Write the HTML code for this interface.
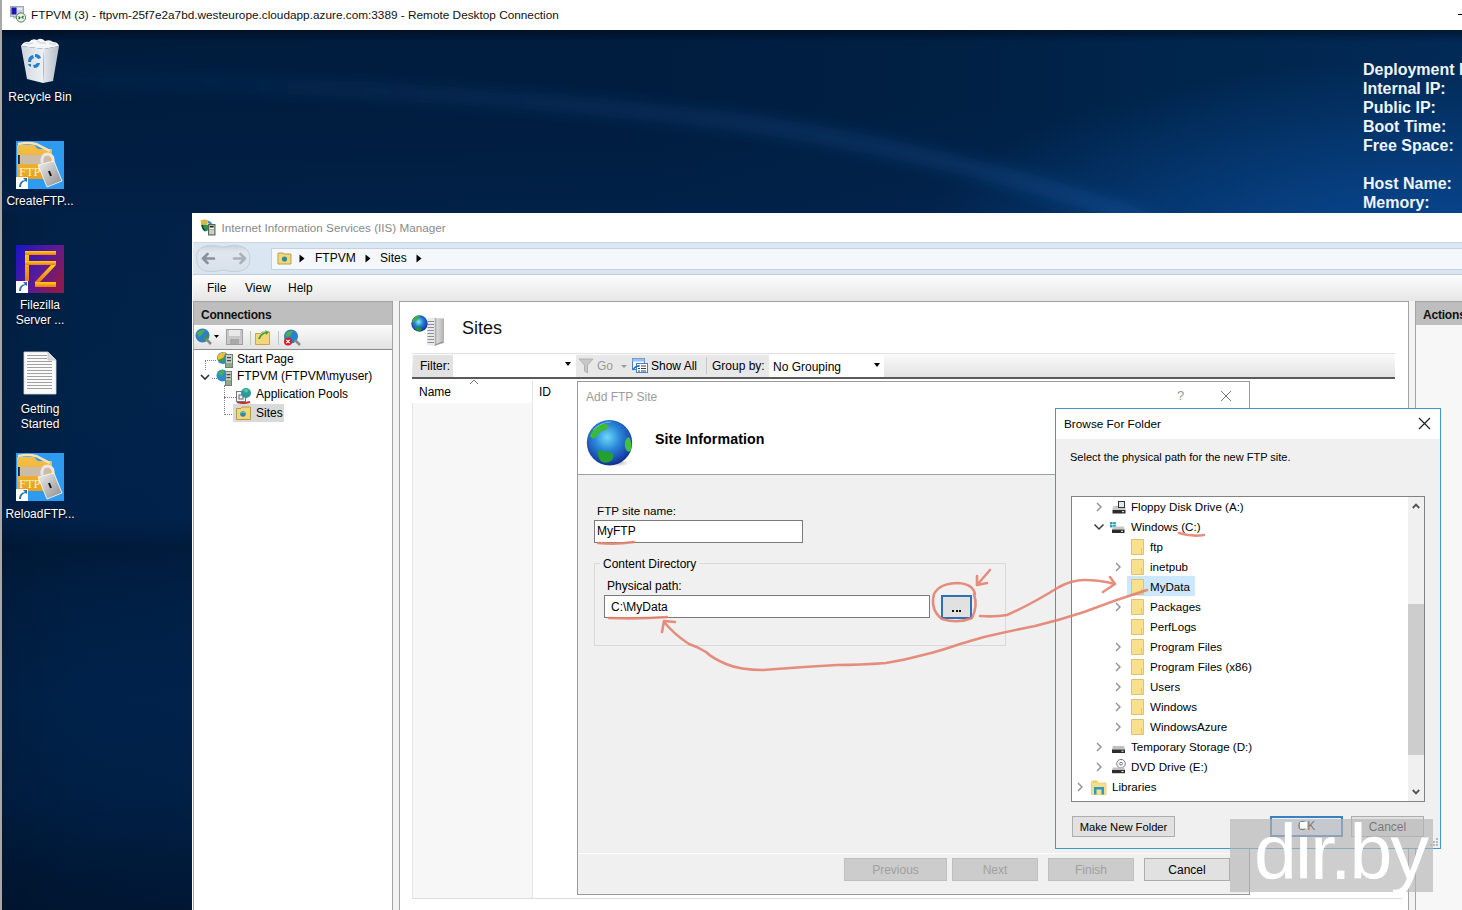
<!DOCTYPE html>
<html><head><meta charset="utf-8">
<style>
*{margin:0;padding:0;box-sizing:border-box}
html,body{width:1462px;height:910px;overflow:hidden;background:#0a2548;font-family:"Liberation Sans",sans-serif;}
.a{position:absolute;white-space:nowrap}
#root{position:absolute;left:0;top:0;width:1462px;height:910px;overflow:hidden}
#rdptitle{left:0;top:0;width:1462px;height:30px;background:#fff}
#desk{left:0;top:30px;width:1462px;height:880px;background:#001c3c}
#band{left:0;top:30px;width:1462px;height:183px;background:
linear-gradient(180deg, rgba(0,5,20,0.5) 0px, rgba(0,5,20,0) 12px),
radial-gradient(ellipse 520px 210px at 1420px 240px, rgba(10,82,165,0.85), rgba(10,82,165,0.35) 60%, rgba(10,82,165,0) 100%),
linear-gradient(180deg, rgba(0,0,0,0) 40%, rgba(10,50,110,0.18) 100%),
linear-gradient(90deg, #001c3d 0%, #001d3f 45%, #002044 65%, #00254c 80%, #022a56 100%)}
#strip{left:0;top:213px;width:192px;height:697px;background:linear-gradient(90deg,rgba(0,0,0,0.1) 0%,rgba(0,0,0,0) 40%,rgba(20,60,120,0.03) 100%),linear-gradient(180deg,#012147 0%,#012349 25%,#00214a 44%,#001a3a 48%,#001e42 54%,#00224a 70%,#001f44 84%,#001836 95%,#001632 100%)}
.dl{color:#fff;font-size:12px;text-align:center;width:80px;left:0;line-height:15px;text-shadow:0 1px 2px #000}
.info{color:#eef4fa;font-weight:bold;font-size:16px;left:1363px;line-height:19px}
.btn{background:#e1e1e1;border:1px solid #adadad;font-size:12px;color:#000;text-align:center;line-height:21px}
.dis{background:#cccccc;border-color:#bfbfbf;color:#a0a0a0}
.tr{font-size:11.6px;color:#000;line-height:15px}
.t{font-size:12px;color:#000}
</style></head><body>
<div id="root">
  <div class="a" id="desk"></div>
  <div class="a" id="band"></div>
  <svg class="a" style="left:0;top:30px" width="1462" height="183" viewBox="0 30 1462 183"><defs><filter id="bl" x="-10%" y="-50%" width="120%" height="200%"><feGaussianBlur stdDeviation="7"/></filter></defs>
    <defs><linearGradient id="stk" gradientUnits="userSpaceOnUse" x1="60" y1="0" x2="1160" y2="0"><stop offset="0" stop-color="#2873cd" stop-opacity="0.05"/><stop offset="0.5" stop-color="#2873cd" stop-opacity="0.14"/><stop offset="1" stop-color="#2873cd" stop-opacity="0.22"/></linearGradient></defs>
    <path d="M60 78 Q500 90 760 125 Q980 160 1160 225" stroke="url(#stk)" stroke-width="18" fill="none" filter="url(#bl)"/></svg>
  <div class="a" id="strip"></div>
  <div class="a" id="rdptitle"></div>
  <div class="a" style="left:1458px;top:14px;width:4px;height:1px;background:#000"></div>
  <div class="a" style="left:0;top:0;width:2px;height:910px;background:#a8a8a8"></div>
  <svg class="a" style="left:9px;top:5px" width="18" height="19" viewBox="0 0 18 19">
    <rect x="1.5" y="1.5" width="13" height="10" fill="#c8d0e0" stroke="#a0a8b8"/><rect x="2.5" y="2.5" width="5" height="7" fill="#1a14b0"/><rect x="8" y="3" width="5" height="2" fill="#e8f0ff"/>
    <rect x="4" y="12" width="6" height="1.5" fill="#bbb"/>
    <circle cx="12" cy="12.5" r="4.6" fill="#e8f4e8" stroke="#5a7a5a" stroke-width="1"/><path d="M9.5 11.5L11 12.7L9.5 14M14.5 11L13 12.3L14.5 13.6" stroke="#2a6a2a" stroke-width="1.2" fill="none"/>
  </svg>
  <div class="a t" style="left:31px;top:8px;font-size:11.8px;color:#111">FTPVM (3) - ftpvm-25f7e2a7bd.westeurope.cloudapp.azure.com:3389 - Remote Desktop Connection</div>

  <!-- desktop info -->
  <div class="a info" style="top:60px">Deployment I<br>Internal IP:<br>Public IP:<br>Boot Time:<br>Free Space:<br><br>Host Name:<br>Memory:</div>


  <!-- desktop icons -->
  <svg class="a" style="left:19px;top:37px" width="42" height="48" viewBox="0 0 42 48">
    <defs><linearGradient id="rbL" x1="0" y1="0" x2="1" y2="0"><stop offset="0" stop-color="#cfd6de"/><stop offset="1" stop-color="#eef2f5"/></linearGradient>
    <linearGradient id="rbR" x1="0" y1="0" x2="1" y2="0"><stop offset="0" stop-color="#e4e8ec"/><stop offset="1" stop-color="#b4bcc6"/></linearGradient></defs>
    <path d="M2 9 L25 12 L24 46 L8 42Z" fill="url(#rbL)"/>
    <path d="M25 12 L40 9 L34 44 L24 46Z" fill="url(#rbR)"/>
    <path d="M2 9 Q5 4 10 5 Q13 1 18 3 Q22 0 26 4 Q31 2 34 5 Q39 5 40 9 L25 12Z" fill="#f4f6f8"/>
    <path d="M6 6 Q10 8 14 6 M18 4 Q22 7 27 6 M30 6 Q34 8 37 7" stroke="#c8ced6" stroke-width="1" fill="none"/>
    <g fill="#1f80d2"><path d="M9 25 Q9 19 14 18 L15 21 Q12 22 12 25Z"/><path d="M16 17 Q21 17 22 21 L19 22 Q18 20 16 20Z"/><path d="M21 26 Q20 31 15 31 L14 28 Q17 28 18 26Z"/><path d="M12 30 Q9 29 9 27 L12 27Z"/></g>
  </svg>
  <svg class="a" style="left:16px;top:141px" width="48" height="48" viewBox="0 0 48 48">
    <defs><linearGradient id="fo141" x1="0" y1="0" x2="0" y2="1"><stop offset="0" stop-color="#f7c04a"/><stop offset="1" stop-color="#e8a020"/></linearGradient>
    <linearGradient id="lk141" x1="0" y1="0" x2="1" y2="1"><stop offset="0" stop-color="#f0f0f0"/><stop offset="1" stop-color="#8a8a8a"/></linearGradient></defs>
    <rect width="48" height="48" fill="#2f9bf0"/>
    <path d="M1 4 L18 4 L22 8 L36 8 L36 38 L1 38Z" fill="url(#fo141)"/>
    <path d="M2 3 Q12 1 20 3 L34 10" stroke="#fbe4b8" stroke-width="2.5" fill="none"/>
    <rect x="1" y="14" width="33" height="9" fill="#cbbba8"/>
    <rect x="2" y="14" width="1.8" height="9" fill="#222"/>
    <text x="3" y="35" font-family="Liberation Serif" font-size="12.5" fill="#fff2c0">FTP</text>
    <path d="M26 22 Q25 13 32 13 Q38 14 37 22" stroke="#e8e8e8" stroke-width="3" fill="none"/>
    <path d="M22 24 L38 20 L46 40 L31 46Z" fill="url(#lk141)" stroke="#fff" stroke-width="0.8"/>
    <path d="M33 30 L35 35" stroke="#111" stroke-width="2"/>
    <rect x="0" y="36" width="12" height="12" fill="#fff"/><path d="M3 46 Q3 40 9 39 L7 37 L11 37 L11 41 L9.5 40 Q5 41 5 46Z" fill="#2a6fb0"/>
  </svg>
  <svg class="a" style="left:16px;top:245px" width="48" height="48" viewBox="0 0 48 48">
    <defs><linearGradient id="fz" x1="0" y1="0" x2="1" y2="0.6"><stop offset="0" stop-color="#1a14c8"/><stop offset="0.6" stop-color="#5a1a9a"/><stop offset="1" stop-color="#8a1a50"/></linearGradient>
    <linearGradient id="fzo" x1="0" y1="0" x2="0" y2="1"><stop offset="0" stop-color="#ffd018"/><stop offset="1" stop-color="#f07818"/></linearGradient></defs>
    <rect width="48" height="48" fill="url(#fz)"/>
    <g fill="url(#fzo)"><rect x="9" y="6" width="4" height="30"/><rect x="9" y="6" width="31" height="4"/><rect x="9" y="16" width="31" height="4"/><path d="M35 20 L40 20 L24 37 L19 37Z"/><rect x="19" y="37" width="21" height="5"/></g>
    <rect x="0" y="36" width="12" height="12" fill="#fff"/><path d="M3 46 Q3 40 9 39 L7 37 L11 37 L11 41 L9.5 40 Q5 41 5 46Z" fill="#2a6fb0"/>
  </svg>
  <svg class="a" style="left:23px;top:351px" width="34" height="44" viewBox="0 0 34 44">
    <path d="M1 1 H25 L33 9 V43 H1Z" fill="#fbfbfb" stroke="#d8d8d8" stroke-width="0.8"/>
    <path d="M25 1 V9 H33" fill="#d8dce0" stroke="#c0c0c0" stroke-width="0.8"/>
    <g stroke="#a0a0a0" stroke-width="1"><path d="M4 4.5H24M4 7.5H24M4 10.5H29M4 13.5H29M4 16.5H29M4 19.5H29M4 22.5H29M4 25.5H29M4 28.5H29M4 31.5H29M4 34.5H29M4 37.5H29"/></g>
  </svg>
  <svg class="a" style="left:16px;top:453px" width="48" height="48" viewBox="0 0 48 48">
    <defs><linearGradient id="fo453" x1="0" y1="0" x2="0" y2="1"><stop offset="0" stop-color="#f7c04a"/><stop offset="1" stop-color="#e8a020"/></linearGradient>
    <linearGradient id="lk453" x1="0" y1="0" x2="1" y2="1"><stop offset="0" stop-color="#f0f0f0"/><stop offset="1" stop-color="#8a8a8a"/></linearGradient></defs>
    <rect width="48" height="48" fill="#2f9bf0"/>
    <path d="M1 4 L18 4 L22 8 L36 8 L36 38 L1 38Z" fill="url(#fo453)"/>
    <path d="M2 3 Q12 1 20 3 L34 10" stroke="#fbe4b8" stroke-width="2.5" fill="none"/>
    <rect x="1" y="14" width="33" height="9" fill="#cbbba8"/>
    <rect x="2" y="14" width="1.8" height="9" fill="#222"/>
    <text x="3" y="35" font-family="Liberation Serif" font-size="12.5" fill="#fff2c0">FTP</text>
    <path d="M26 22 Q25 13 32 13 Q38 14 37 22" stroke="#e8e8e8" stroke-width="3" fill="none"/>
    <path d="M22 24 L38 20 L46 40 L31 46Z" fill="url(#lk453)" stroke="#fff" stroke-width="0.8"/>
    <path d="M33 30 L35 35" stroke="#111" stroke-width="2"/>
    <rect x="0" y="36" width="12" height="12" fill="#fff"/><path d="M3 46 Q3 40 9 39 L7 37 L11 37 L11 41 L9.5 40 Q5 41 5 46Z" fill="#2a6fb0"/>
  </svg>
  <!-- desktop labels -->
  <div class="a dl" style="top:90px">Recycle Bin</div>
  <div class="a dl" style="top:194px">CreateFTP...</div>
  <div class="a dl" style="top:298px">Filezilla<br>Server ...</div>
  <div class="a dl" style="top:402px">Getting<br>Started</div>
  <div class="a dl" style="top:507px">ReloadFTP...</div>


  <!-- IIS window -->
  <div class="a" style="left:192px;top:213px;width:1270px;height:697px;background:#fff"></div>
  <!-- title -->
  <svg class="a" style="left:199px;top:218px" width="18" height="18" viewBox="0 0 18 18">
    <path d="M1.5 2.5 Q5 1 9 2 L8.5 7 Q5 8 2.5 7Z" fill="#d8b848"/>
    <path d="M9 2.5 Q12 3 13.5 6 L11 8 Q10 5 9 5Z" fill="#4a90b8"/>
    <path d="M2.5 6.5 Q5 7 8.5 7 L11 8.5 Q10 13 6 13.5 Q3 12 2.5 6.5Z" fill="#1f9a50"/>
    <path d="M3 7 Q3.5 11 6 12.5" stroke="#153a4a" stroke-width="1.5" fill="none"/>
    <rect x="9.5" y="6.5" width="6.5" height="10.5" fill="#a8b4a0" stroke="#5a6658" stroke-width="1"/>
    <rect x="11" y="8" width="3.5" height="1.2" fill="#223"/><rect x="10.5" y="10" width="4.5" height="1" fill="#eef"/><rect x="10.5" y="12" width="4.5" height="4" fill="#c8d4c0"/>
  </svg>
  <div class="a t" id="iistitle" style="left:221.5px;top:221px;font-size:11.7px;color:#8a8a8a">Internet Information Services (IIS) Manager</div>
  <!-- address bar -->
  <div class="a" style="left:193px;top:242px;width:1269px;height:33px;background:#dbe6f3;border-top:1px solid #c9d7e7;border-bottom:1px solid #c0cfe0"></div>
  <svg class="a" style="left:195px;top:244px" width="57" height="29" viewBox="0 0 57 29">
    <defs><linearGradient id="pill" x1="0" y1="0" x2="0" y2="1"><stop offset="0" stop-color="#c9d3de"/><stop offset="0.25" stop-color="#dfe6ee"/><stop offset="1" stop-color="#d8e1eb"/></linearGradient></defs>
    <path d="M14 1.5 Q22 1 28 3 Q34 1 42 1.5 Q55 3 55 14.5 Q55 27 42 27.5 Q34 28 28 26 Q22 28 14 27.5 Q1.5 27 1.5 14.5 Q1.5 2 14 1.5Z" fill="url(#pill)" stroke="#c5ced8" stroke-width="1"/>
    <path d="M8 14.5H19M8 14.5L12.5 10M8 14.5L12.5 19" stroke="#8a929b" stroke-width="2.6" fill="none" stroke-linecap="round"/>
    <path d="M39 14.5H50M50 14.5L45.5 10M50 14.5L45.5 19" stroke="#a9b1ba" stroke-width="2.6" fill="none" stroke-linecap="round"/>
  </svg>
  <div class="a" style="left:271px;top:248px;width:1191px;height:22px;background:#f4f8fc;border:1px solid #c3d1e0;border-right:none"></div>
  <svg class="a" style="left:277px;top:250px" width="15" height="15" viewBox="0 0 15 15"><path d="M1 3h5l1 1h7v10H1z" fill="#f0d878" stroke="#b8a050"/><circle cx="7.5" cy="9" r="2.6" fill="#2f8a9a"/></svg>
  <svg class="a" style="left:299px;top:254px" width="6" height="9" viewBox="0 0 6 9"><path d="M0.5 0.5L5.5 4.5L0.5 8.5Z" fill="#000"/></svg>
  <div class="a t" style="left:315px;top:251px">FTPVM</div>
  <svg class="a" style="left:365px;top:254px" width="6" height="9" viewBox="0 0 6 9"><path d="M0.5 0.5L5.5 4.5L0.5 8.5Z" fill="#000"/></svg>
  <div class="a t" style="left:380px;top:251px">Sites</div>
  <svg class="a" style="left:416px;top:254px" width="6" height="9" viewBox="0 0 6 9"><path d="M0.5 0.5L5.5 4.5L0.5 8.5Z" fill="#000"/></svg>
  <!-- menu bar -->
  <div class="a" style="left:193px;top:275px;width:1269px;height:26px;background:linear-gradient(#fdfdfd,#e6e6e6)"></div>
  <div class="a t" style="left:207px;top:281px">File</div>
  <div class="a t" style="left:245px;top:281px">View</div>
  <div class="a t" style="left:288px;top:281px">Help</div>
  <div class="a" style="left:193px;top:301px;width:1269px;height:609px;background:#f3f3f3"></div>

  <!-- connections panel -->
  <div class="a" style="left:193px;top:301px;width:200px;height:640px;background:#fff;border:1px solid #a3a3a3"></div>
  <div class="a" style="left:194px;top:302px;width:198px;height:23px;background:#bebebe"></div>
  <div class="a" style="left:201px;top:308px;font-size:12px;font-weight:bold;color:#111;letter-spacing:-0.2px">Connections</div>
  <div class="a" style="left:194px;top:325px;width:198px;height:24px;background:linear-gradient(#fbfbfb,#e2e2e2)"></div>
  <div class="a" style="left:194px;top:349px;width:198px;height:1px;background:#8c8c8c"></div>

  <!-- sites panel -->
  <div class="a" style="left:399px;top:301px;width:1010px;height:640px;background:#fff;border:1px solid #a3a3a3"></div>
  <div class="a" style="left:462px;top:318px;font-size:18px;color:#111">Sites</div>
  <div class="a" style="left:412px;top:353px;width:983px;height:26px;background:linear-gradient(#fafafa,#e3e3e3);border-top:1px solid #e2e2e2;border-bottom:2px solid #5a5a5a"></div>
  <div class="a" style="left:413px;top:355px;width:40px;height:22px;background:#e2e2e2"></div>
  <div class="a t" style="left:420px;top:359px">Filter:</div>
  <div class="a" style="left:453px;top:355px;width:123px;height:22px;background:#fff"></div>
  <div class="a" style="left:565px;top:362px;width:0;height:0;border-left:3.5px solid transparent;border-right:3.5px solid transparent;border-top:4px solid #000"></div>
  <div class="a" style="left:576px;top:355px;width:193px;height:22px;background:#e8e8e8"></div>
  <div class="a t" style="left:597px;top:359px;color:#9a9a9a">Go</div>
  <div class="a t" style="left:651px;top:359px">Show All</div>
  <div class="a" style="left:706px;top:357px;width:1px;height:17px;background:#c8c8c8"></div>
  <div class="a t" style="left:712px;top:359px">Group by:</div>
  <div class="a" style="left:769px;top:355px;width:115px;height:22px;background:#fff"></div>
  <div class="a t" style="left:773px;top:360px">No Grouping</div>
  <div class="a" style="left:874px;top:363px;width:0;height:0;border-left:3.5px solid transparent;border-right:3.5px solid transparent;border-top:4px solid #000"></div>
  <!-- list -->
  <div class="a" style="left:412px;top:380px;width:120px;height:519px;background:#f7f7f7;border-left:1px solid #e4e4e4;border-bottom:1px solid #dcdcdc"></div>
  <div class="a" style="left:412px;top:380px;width:120px;height:23px;background:#fff"></div>
  <div class="a" style="left:532px;top:380px;width:1px;height:519px;background:#e6e6e6"></div>
  <div class="a" style="left:532px;top:898px;width:870px;height:1px;background:#dcdcdc"></div>
  <div class="a t" style="left:419px;top:385px">Name</div>
  <div class="a t" style="left:539px;top:385px">ID</div>
  <svg class="a" style="left:469px;top:379px" width="10" height="6" viewBox="0 0 10 6"><path d="M1 5L5 1L9 5" stroke="#7a7a7a" stroke-width="1" fill="none"/></svg>


  <!-- connections toolbar icons -->
  <svg class="a" style="left:195px;top:328px" width="26" height="18" viewBox="0 0 26 18">
    <circle cx="7.5" cy="7.5" r="7" fill="#2f7fc8"/><path d="M2 5 Q6 1 10 2 Q8 6 4 9Z" fill="#4cb04c"/><path d="M8 10 Q12 9 14 6 L14 10 Q11 13 8 12Z" fill="#3a9a3a"/>
    <path d="M11 11 L16 16" stroke="#888" stroke-width="2.5"/>
    <path d="M19 7 L24 7 L21.5 10Z" fill="#000"/>
  </svg>
  <svg class="a" style="left:226px;top:329px" width="17" height="16" viewBox="0 0 17 16">
    <rect x="0.5" y="0.5" width="16" height="15" fill="#c8c8c8" stroke="#a0a0a0"/><rect x="3" y="1" width="11" height="6" fill="#e8e8e8"/><rect x="4" y="10" width="9" height="5" fill="#a8a8a8"/>
  </svg>
  <div class="a" style="left:250px;top:331px;width:1px;height:14px;background:#c4c4c4"></div>
  <svg class="a" style="left:255px;top:329px" width="15" height="16" viewBox="0 0 15 16">
    <path d="M0.5 4.5H6L7 3H14.5V15.5H0.5Z" fill="#f1d67a" stroke="#c8a850"/><path d="M3 10 Q5 4 11 3 L10 1 L14 3 L11 6 L11 4.5 Q7 5 5 10Z" fill="#3aa03a"/>
  </svg>
  <div class="a" style="left:278px;top:331px;width:1px;height:14px;background:#c4c4c4"></div>
  <svg class="a" style="left:283px;top:329px" width="18" height="17" viewBox="0 0 18 17">
    <circle cx="8" cy="7.5" r="7" fill="#2f7fc8"/><path d="M2.5 5 Q6 1 10 2 Q8 6 4 9Z" fill="#4cb04c"/><path d="M12 11 L17 16" stroke="#888" stroke-width="2.5"/>
    <circle cx="5" cy="12.5" r="4" fill="#d02030"/><path d="M3.3 10.8L6.7 14.2M6.7 10.8L3.3 14.2" stroke="#fff" stroke-width="1.2"/>
  </svg>
  <!-- tree lines -->
  <div class="a" style="left:205px;top:360px;width:11px;height:0;border-top:1px dotted #808080"></div>
  <div class="a" style="left:205px;top:360px;width:0;height:10px;border-left:1px dotted #808080"></div>
  <div class="a" style="left:212px;top:378px;width:5px;height:0;border-top:1px dotted #808080"></div>
  <div class="a" style="left:224px;top:385px;width:0;height:30px;border-left:1px dotted #808080"></div>
  <div class="a" style="left:224px;top:397px;width:12px;height:0;border-top:1px dotted #808080"></div>
  <div class="a" style="left:224px;top:414px;width:10px;height:0;border-top:1px dotted #808080"></div>
  <svg class="a" style="left:200px;top:374px" width="10" height="7" viewBox="0 0 10 7"><path d="M1 1L5 5L9 1" stroke="#333" stroke-width="1.6" fill="none"/></svg>
  <div class="a" style="left:233px;top:404px;width:51px;height:18px;background:#d9d9d9"></div>
  <!-- tree icons -->
  <svg class="a" style="left:216px;top:351px" width="17" height="17" viewBox="0 0 17 17">
    <circle cx="7" cy="7" r="6" fill="#2f8ad0"/><path d="M1.5 5 Q5 0 10 1.5 L7 7 Q4 9 2 9Z" fill="#f0c030"/><path d="M2 9 Q5 12 9 10 L8 7Z" fill="#3aa03a"/>
    <rect x="9.5" y="3.5" width="7" height="13" fill="#c4d0c0" stroke="#6f806f"/><rect x="11" y="6" width="4" height="1.2" fill="#445"/><rect x="11" y="9" width="4" height="1.2" fill="#445"/><rect x="10" y="12" width="6" height="4" fill="#8fa88f"/>
  </svg>
  <svg class="a" style="left:216px;top:369px" width="17" height="17" viewBox="0 0 17 17">
    <circle cx="6.5" cy="6.5" r="6" fill="#2f8ad0"/><path d="M1.5 5 Q5 0 9 1.5 L6 7Z" fill="#4cb04c"/>
    <rect x="9.5" y="2.5" width="6" height="14" fill="#c4d0c0" stroke="#6f806f"/><rect x="10.5" y="5" width="4" height="1.2" fill="#445"/><rect x="10.5" y="8" width="4" height="1.2" fill="#445"/><rect x="10" y="11" width="5" height="5" fill="#8fa88f"/>
  </svg>
  <svg class="a" style="left:235px;top:387px" width="17" height="17" viewBox="0 0 17 17">
    <path d="M2 15 Q8 17 15 15" stroke="#c03030" stroke-width="2" fill="none"/>
    <rect x="1.5" y="4.5" width="9" height="10" fill="#f4f4f4" stroke="#777"/><rect x="4" y="8" width="4" height="4" fill="none" stroke="#666"/>
    <circle cx="11" cy="6" r="5" fill="#2a9a9a"/><path d="M8 3 Q11 1 14 3 L11 6Z" fill="#60c0a0"/>
  </svg>
  <svg class="a" style="left:236px;top:406px" width="15" height="14" viewBox="0 0 15 14">
    <path d="M0.5 2.5H5L6 1H14.5V13.5H0.5Z" fill="#f1d67a" stroke="#b89a48"/><circle cx="7" cy="8" r="2.8" fill="#2f8a9a"/><path d="M5 7 Q7 5 9 7" stroke="#6cd" stroke-width="1" fill="none"/>
  </svg>
  <div class="a t" style="left:237px;top:352px">Start Page</div>
  <div class="a t" style="left:237px;top:369px">FTPVM (FTPVM\myuser)</div>
  <div class="a t" style="left:256px;top:387px">Application Pools</div>
  <div class="a t" style="left:256px;top:406px">Sites</div>

  <!-- sites icon -->
  <svg class="a" style="left:410px;top:312px" width="36" height="36" viewBox="0 0 36 36">
    <defs><linearGradient id="srv" x1="0" y1="0" x2="1" y2="0"><stop offset="0" stop-color="#9a9a9a"/><stop offset="0.3" stop-color="#d8d8d8"/><stop offset="1" stop-color="#b0b0b0"/></linearGradient>
    <radialGradient id="gl2" cx="45%" cy="40%" r="60%"><stop offset="0" stop-color="#7ff0f0"/><stop offset="0.45" stop-color="#2a80d0"/><stop offset="1" stop-color="#1030a0"/></radialGradient></defs>
    <path d="M24.5 6 L34 6.5 L34 31 L24.5 34Z" fill="url(#srv)"/>
    <path d="M17 6 L24.5 6 L24.5 34 L17 33Z" fill="#e8eaec"/>
    <g stroke="#8a8e98" stroke-width="1"><path d="M17.5 9.5H24M17.5 12.5H24M17.5 15.5H24M17.5 18.5H24M17.5 21.5H24M17.5 24.5H24M17.5 27.5H24M17.5 30.5H24"/></g>
    <path d="M25 33 L33 30" stroke="#888" stroke-width="1"/>
    <circle cx="9.5" cy="11.5" r="8.2" fill="url(#gl2)"/>
    <path d="M2.5 8 Q5 3 10 3.5 Q8 7 6 9 Q4 10.5 2.5 10Z" fill="#3cb040"/><path d="M5 15 Q9 14.5 12 17 Q11 19.5 8 19 Q5 18 5 15Z" fill="#1a9a2a"/>
  </svg>
  <!-- filter bar icons -->
  <svg class="a" style="left:578px;top:357px" width="16" height="17" viewBox="0 0 16 17"><path d="M1 2 H15 L9.5 8 V16 L6.5 14 V8Z" fill="#c8c8c8" stroke="#b0b0b0"/></svg>
  <div class="a" style="left:621px;top:365px;width:0;height:0;border-left:3px solid transparent;border-right:3px solid transparent;border-top:3px solid #999"></div>
  <svg class="a" style="left:631px;top:357px" width="18" height="17" viewBox="0 0 18 17">
    <rect x="1.5" y="1.5" width="12" height="11" fill="#fff" stroke="#4a7fbf"/><rect x="1.5" y="1.5" width="12" height="3" fill="#9ec0e8"/>
    <rect x="5.5" y="6.5" width="11" height="9" fill="#fff" stroke="#4a7fbf"/><path d="M7 9h2M10 9h5M7 11.5h2M10 11.5h5M7 14h2M10 14h5" stroke="#345" stroke-width="1"/>
    <path d="M2 13 Q4 9 8 9" stroke="#2a70c0" stroke-width="1.5" fill="none"/>
  </svg>

  <!-- actions panel -->
  <div class="a" style="left:1415px;top:301px;width:47px;height:640px;background:#f7f7f7;border:1px solid #a3a3a3;border-right:none"></div>
  <div class="a" style="left:1416px;top:302px;width:46px;height:23px;background:#bebebe"></div>
  <div class="a" style="left:1423px;top:308px;font-size:12px;font-weight:bold;color:#111;letter-spacing:-0.2px">Actions</div>


  <!-- Add FTP Site dialog -->
  <div class="a" style="left:577px;top:381px;width:673px;height:514px;background:#f0f0f0;border:1px solid #9a9a9a"></div>
  <div class="a" style="left:578px;top:382px;width:671px;height:93px;background:#fff;border-bottom:1px solid #a0a0a0"></div>
  <div class="a t" style="left:586px;top:390px;color:#9b9b9b">Add FTP Site</div>
  <div class="a" style="left:1177px;top:388px;font-size:13px;color:#999">?</div>
  <svg class="a" style="left:1220px;top:390px" width="12" height="12" viewBox="0 0 12 12"><path d="M1 1L11 11M11 1L1 11" stroke="#777" stroke-width="1"/></svg>
  <svg class="a" style="left:585px;top:418px" width="50" height="50" viewBox="0 0 50 50">
    <defs><radialGradient id="gl" cx="45%" cy="38%" r="62%"><stop offset="0" stop-color="#6fd8f8"/><stop offset="0.45" stop-color="#2a88d8"/><stop offset="0.85" stop-color="#1a48b0"/><stop offset="1" stop-color="#10308a"/></radialGradient>
    <radialGradient id="glsh" cx="50%" cy="50%" r="50%"><stop offset="0" stop-color="#000" stop-opacity="0.25"/><stop offset="1" stop-color="#000" stop-opacity="0"/></radialGradient></defs>
    <ellipse cx="33" cy="45" rx="12" ry="3.5" fill="url(#glsh)"/>
    <circle cx="24.5" cy="24.7" r="22.7" fill="url(#gl)"/>
    <path d="M5 17 Q9 9 17 6 Q22 5 24 8 Q22 12 18 13 Q14 14 12 18 Q10 21 7 20 Q5 19 5 17Z" fill="#3cb83c"/>
    <path d="M44 19 Q47 24 46.5 31 Q45 35 42 33 Q39 29 40 24 Q41 20 44 19Z" fill="#44c040"/>
    <path d="M13 33 Q20 32 27 35 Q30 38 27 42 Q23 46 17 44 Q12 40 13 33Z" fill="#22a030"/>
    <path d="M8 12 Q16 4 26 4" stroke="#bfe8ff" stroke-width="1" fill="none" opacity="0.5"/>
  </svg>
  <div class="a" style="left:655px;top:431px;font-size:14.2px;font-weight:bold;color:#000;letter-spacing:0.1px">Site Information</div>
  <div class="a t" style="left:597px;top:504px;font-size:11.7px">FTP site name:</div>
  <div class="a" style="left:594px;top:520px;width:209px;height:23px;background:#fff;border:1px solid #7a7a7a"></div>
  <div class="a t" style="left:597px;top:524px">MyFTP</div>
  <div class="a" style="left:594px;top:563px;width:412px;height:83px;border:1px solid #d9d9d9"></div>
  <div class="a t" style="left:600px;top:557px;padding:0 3px;background:#f0f0f0">Content Directory</div>
  <div class="a t" style="left:607px;top:579px">Physical path:</div>
  <div class="a" style="left:604px;top:595px;width:326px;height:23px;background:#fff;border:1px solid #7a7a7a"></div>
  <div class="a t" style="left:611px;top:600px">C:\MyData</div>
  <div class="a" style="left:941px;top:595px;width:31px;height:24px;background:#e1e1e1;border:2px solid #2f6fb3"></div>
  <div class="a" style="left:952px;top:610px;width:2px;height:2px;background:#111"></div><div class="a" style="left:955.5px;top:610px;width:2px;height:2px;background:#111"></div><div class="a" style="left:959px;top:610px;width:2px;height:2px;background:#111"></div>
  <div class="a" style="left:578px;top:853px;width:671px;height:1px;background:#fff"></div>
  <div class="a btn dis" style="left:844px;top:858px;width:103px;height:23px;line-height:23.5px">Previous</div>
  <div class="a btn dis" style="left:952px;top:858px;width:86px;height:23px;line-height:23.5px">Next</div>
  <div class="a btn dis" style="left:1048px;top:858px;width:86px;height:23px;line-height:23.5px">Finish</div>
  <div class="a btn" style="left:1144px;top:858px;width:86px;height:23px;line-height:23.5px">Cancel</div>

  <!-- Browse For Folder -->
  <div class="a" style="left:1055px;top:408px;width:386px;height:441px;background:#f0f0f0;border:1px solid #3a9cc4"></div>
  <div class="a" style="left:1056px;top:409px;width:384px;height:30px;background:#fff"></div>
  <div class="a t" style="left:1064px;top:417px;font-size:11.8px">Browse For Folder</div>
  <svg class="a" style="left:1418px;top:417px" width="13" height="13" viewBox="0 0 13 13"><path d="M1 1L12 12M12 1L1 12" stroke="#222" stroke-width="1.2"/></svg>
  <div class="a" style="left:1070px;top:451px;font-size:11px;color:#000">Select the physical path for the new FTP site.</div>
  <div class="a" style="left:1071px;top:496px;width:354px;height:306px;background:#fff;border:1px solid #828282"></div>
  <div class="a" style="left:1408px;top:497px;width:16px;height:304px;background:#f0f0f0"></div>
  <div class="a" style="left:1408px;top:604px;width:16px;height:151px;background:#cdcdcd"></div>
  <svg class="a" style="left:1410px;top:501px" width="12" height="10" viewBox="0 0 12 10"><path d="M2.8 7L6 3.6L9.2 7" stroke="#555" stroke-width="1.9" fill="none"/></svg>
  <svg class="a" style="left:1410px;top:787px" width="12" height="10" viewBox="0 0 12 10"><path d="M2.8 3L6 6.4L9.2 3" stroke="#555" stroke-width="1.9" fill="none"/></svg>
  <svg class="a" style="left:1095px;top:502px" width="8" height="10" viewBox="0 0 8 10"><path d="M2 1L6 5L2 9" stroke="#8f8f8f" stroke-width="1.4" fill="none"/></svg>
  <svg class="a" style="left:1111px;top:501px" width="16" height="13" viewBox="0 0 16 13"><path d="M1.5 6.5 L3 5 H14 L14.5 6.5Z" fill="#b8b8b8"/><rect x="1.5" y="9" width="13" height="3.5" fill="#2c2c2c"/><path d="M1.5 6.5H14.5V9H1.5Z" fill="#c8c8c8"/><rect x="7.5" y="0.5" width="6" height="6" fill="#dfe6ee" stroke="#333" stroke-width="1"/><rect x="11" y="10" width="2" height="1.2" fill="#e0e0e0"/></svg>
  <div class="a tr" style="left:1131px;top:499px">Floppy Disk Drive (A:)</div>
  <svg class="a" style="left:1093px;top:523px" width="12" height="8" viewBox="0 0 12 8"><path d="M1.5 1.5L6 6L10.5 1.5" stroke="#3a3a3a" stroke-width="1.5" fill="none"/></svg>
  <svg class="a" style="left:1109px;top:521px" width="17" height="13" viewBox="0 0 17 13"><rect x="1" y="1" width="2.6" height="2.4" fill="#2a9ab8"/><rect x="4.2" y="1" width="2.6" height="2.4" fill="#2a9ab8"/><rect x="1" y="4" width="2.6" height="2.4" fill="#2a9ab8"/><rect x="4.2" y="4" width="2.6" height="2.4" fill="#2a9ab8"/><path d="M3 8.5 L4.5 5.5 H15 L15.5 8.5Z" fill="#c8c8c8"/><rect x="3" y="8.5" width="12.5" height="3.5" fill="#2c2c2c"/><rect x="12" y="9.7" width="2" height="1.2" fill="#e0e0e0"/></svg>
  <div class="a tr" style="left:1131px;top:519px">Windows (C:)</div>
  <svg class="a" style="left:1131px;top:539px" width="13" height="16" viewBox="0 0 13 16"><path d="M0.5 0.5H12.5V15.5H0.5Z" fill="#f9e08c" stroke="#dcc274" stroke-width="1"/><path d="M10.5 9V15" stroke="#e8c860" stroke-width="1"/></svg>
  <div class="a tr" style="left:1150px;top:539px">ftp</div>
  <svg class="a" style="left:1114px;top:562px" width="8" height="10" viewBox="0 0 8 10"><path d="M2 1L6 5L2 9" stroke="#8f8f8f" stroke-width="1.4" fill="none"/></svg>
  <svg class="a" style="left:1131px;top:559px" width="13" height="16" viewBox="0 0 13 16"><path d="M0.5 0.5H12.5V15.5H0.5Z" fill="#f9e08c" stroke="#dcc274" stroke-width="1"/><path d="M10.5 9V15" stroke="#e8c860" stroke-width="1"/></svg>
  <div class="a tr" style="left:1150px;top:559px">inetpub</div>
  <div class="a" style="left:1127px;top:576px;width:68px;height:20px;background:#cce8ff"></div>
  <svg class="a" style="left:1131px;top:579px" width="13" height="16" viewBox="0 0 13 16"><path d="M0.5 0.5H12.5V15.5H0.5Z" fill="#f9e08c" stroke="#dcc274" stroke-width="1"/><path d="M10.5 9V15" stroke="#e8c860" stroke-width="1"/></svg>
  <div class="a tr" style="left:1150px;top:579px">MyData</div>
  <svg class="a" style="left:1114px;top:602px" width="8" height="10" viewBox="0 0 8 10"><path d="M2 1L6 5L2 9" stroke="#8f8f8f" stroke-width="1.4" fill="none"/></svg>
  <svg class="a" style="left:1131px;top:599px" width="13" height="16" viewBox="0 0 13 16"><path d="M0.5 0.5H12.5V15.5H0.5Z" fill="#f9e08c" stroke="#dcc274" stroke-width="1"/><path d="M10.5 9V15" stroke="#e8c860" stroke-width="1"/></svg>
  <div class="a tr" style="left:1150px;top:599px">Packages</div>
  <svg class="a" style="left:1131px;top:619px" width="13" height="16" viewBox="0 0 13 16"><path d="M0.5 0.5H12.5V15.5H0.5Z" fill="#f9e08c" stroke="#dcc274" stroke-width="1"/><path d="M10.5 9V15" stroke="#e8c860" stroke-width="1"/></svg>
  <div class="a tr" style="left:1150px;top:619px">PerfLogs</div>
  <svg class="a" style="left:1114px;top:642px" width="8" height="10" viewBox="0 0 8 10"><path d="M2 1L6 5L2 9" stroke="#8f8f8f" stroke-width="1.4" fill="none"/></svg>
  <svg class="a" style="left:1131px;top:639px" width="13" height="16" viewBox="0 0 13 16"><path d="M0.5 0.5H12.5V15.5H0.5Z" fill="#f9e08c" stroke="#dcc274" stroke-width="1"/><path d="M10.5 9V15" stroke="#e8c860" stroke-width="1"/></svg>
  <div class="a tr" style="left:1150px;top:639px">Program Files</div>
  <svg class="a" style="left:1114px;top:662px" width="8" height="10" viewBox="0 0 8 10"><path d="M2 1L6 5L2 9" stroke="#8f8f8f" stroke-width="1.4" fill="none"/></svg>
  <svg class="a" style="left:1131px;top:659px" width="13" height="16" viewBox="0 0 13 16"><path d="M0.5 0.5H12.5V15.5H0.5Z" fill="#f9e08c" stroke="#dcc274" stroke-width="1"/><path d="M10.5 9V15" stroke="#e8c860" stroke-width="1"/></svg>
  <div class="a tr" style="left:1150px;top:659px">Program Files (x86)</div>
  <svg class="a" style="left:1114px;top:682px" width="8" height="10" viewBox="0 0 8 10"><path d="M2 1L6 5L2 9" stroke="#8f8f8f" stroke-width="1.4" fill="none"/></svg>
  <svg class="a" style="left:1131px;top:679px" width="13" height="16" viewBox="0 0 13 16"><path d="M0.5 0.5H12.5V15.5H0.5Z" fill="#f9e08c" stroke="#dcc274" stroke-width="1"/><path d="M10.5 9V15" stroke="#e8c860" stroke-width="1"/></svg>
  <div class="a tr" style="left:1150px;top:679px">Users</div>
  <svg class="a" style="left:1114px;top:702px" width="8" height="10" viewBox="0 0 8 10"><path d="M2 1L6 5L2 9" stroke="#8f8f8f" stroke-width="1.4" fill="none"/></svg>
  <svg class="a" style="left:1131px;top:699px" width="13" height="16" viewBox="0 0 13 16"><path d="M0.5 0.5H12.5V15.5H0.5Z" fill="#f9e08c" stroke="#dcc274" stroke-width="1"/><path d="M10.5 9V15" stroke="#e8c860" stroke-width="1"/></svg>
  <div class="a tr" style="left:1150px;top:699px">Windows</div>
  <svg class="a" style="left:1114px;top:722px" width="8" height="10" viewBox="0 0 8 10"><path d="M2 1L6 5L2 9" stroke="#8f8f8f" stroke-width="1.4" fill="none"/></svg>
  <svg class="a" style="left:1131px;top:719px" width="13" height="16" viewBox="0 0 13 16"><path d="M0.5 0.5H12.5V15.5H0.5Z" fill="#f9e08c" stroke="#dcc274" stroke-width="1"/><path d="M10.5 9V15" stroke="#e8c860" stroke-width="1"/></svg>
  <div class="a tr" style="left:1150px;top:719px">WindowsAzure</div>
  <svg class="a" style="left:1095px;top:742px" width="8" height="10" viewBox="0 0 8 10"><path d="M2 1L6 5L2 9" stroke="#8f8f8f" stroke-width="1.4" fill="none"/></svg>
  <svg class="a" style="left:1111px;top:745px" width="15" height="9" viewBox="0 0 15 9"><path d="M1 4.5 L2 1 H13 L14 4.5Z" fill="#c0c0c0"/><rect x="1" y="4.5" width="13" height="3.5" fill="#2c2c2c"/><rect x="10.5" y="5.6" width="2" height="1.2" fill="#e0e0e0"/></svg>
  <div class="a tr" style="left:1131px;top:739px">Temporary Storage (D:)</div>
  <svg class="a" style="left:1095px;top:762px" width="8" height="10" viewBox="0 0 8 10"><path d="M2 1L6 5L2 9" stroke="#8f8f8f" stroke-width="1.4" fill="none"/></svg>
  <svg class="a" style="left:1111px;top:758px" width="15" height="16" viewBox="0 0 15 16"><circle cx="10" cy="5.7" r="4.3" fill="#fafafa" stroke="#7a7a7a" stroke-width="1"/><circle cx="10" cy="5.7" r="1.4" fill="none" stroke="#7a7a7a" stroke-width="1"/><path d="M1 12 L2 9.5 H13 L14 12Z" fill="#c0c0c0"/><rect x="1" y="12" width="13" height="3.2" fill="#2c2c2c"/><rect x="10.5" y="12.9" width="2" height="1.2" fill="#e0e0e0"/></svg>
  <div class="a tr" style="left:1131px;top:759px">DVD Drive (E:)</div>
  <svg class="a" style="left:1076px;top:782px" width="8" height="10" viewBox="0 0 8 10"><path d="M2 1L6 5L2 9" stroke="#8f8f8f" stroke-width="1.4" fill="none"/></svg>
  <svg class="a" style="left:1091px;top:780px" width="16" height="15" viewBox="0 0 16 15"><path d="M0.5 1.5H6L7 3H15V14.5H0.5Z" fill="#f8de8c" stroke="#e8c870" stroke-width="0.8"/><rect x="2" y="0.5" width="4" height="2" fill="#f0c850"/><path d="M3 14.5V7H13V14.5H10.5V9.5H5.5V14.5Z" fill="#2a9cc0"/></svg>
  <div class="a tr" style="left:1112px;top:779px">Libraries</div>
  <svg class="a" style="left:1428px;top:836px" width="11" height="11" viewBox="0 0 11 11"><g fill="#b8b8b8"><rect x="8" y="2" width="2" height="2"/><rect x="5" y="5" width="2" height="2"/><rect x="8" y="5" width="2" height="2"/><rect x="2" y="8" width="2" height="2"/><rect x="5" y="8" width="2" height="2"/><rect x="8" y="8" width="2" height="2"/></g></svg>
  <div class="a btn" style="left:1072px;top:816px;width:103px;height:21px;font-size:11.2px">Make New Folder</div>
  <div class="a btn" style="left:1270px;top:816px;width:73px;height:21px;border:2px solid #3c7fc0;background:#e5f1fb;line-height:17px">OK</div>
  <div class="a btn" style="left:1351px;top:816px;width:73px;height:21px">Cancel</div>

  <!-- annotations -->
  <svg class="a" style="left:0;top:0" width="1462" height="910" viewBox="0 0 1462 910">
   <g stroke="#e4806e" stroke-width="2.6" fill="none" stroke-linecap="round" stroke-linejoin="round" opacity="0.88">
    <path d="M598 543 Q615 545 634 542"/>
    <path d="M609 618 Q640 619 667 617"/>
    <path d="M1179 533 Q1192 537 1204 535"/>
    <path d="M975 594 Q973 584 958 583 Q940 583 934 594 Q930 610 942 619 Q958 624 972 618 Q978 606 974 594"/>
    <path d="M990 570 L977 585 M977 576 L977 585 L987 583"/>
    <path d="M980 616 Q995 617 1007 615 Q1030 605 1059 587 Q1072 580 1084 580 Q1100 580 1115 584 M1110 577 L1115 584 L1103 592"/>
    <path d="M1147 590 Q1115 600 1084 612 Q1060 620 1035 626 Q1000 633 984 637 Q970 641 960 644 Q940 651 923 655 Q905 660 886 663 Q860 665 837 665 Q800 667 763 670 Q740 670 726 664 Q712 658 706 652 Q698 647 689 644 Q675 635 664 622 M675 622 L664 621 L662 632"/>
   </g>
  </svg>
  <!-- watermark -->
  <div class="a" style="left:1230px;top:819px;width:203px;height:73px;background:rgba(180,180,180,0.66)"></div>
  <div class="a" style="left:1254px;top:807px;font-size:77px;color:#fff;line-height:90px;letter-spacing:-1.8px">dir.by</div>
</div>
</body></html>
